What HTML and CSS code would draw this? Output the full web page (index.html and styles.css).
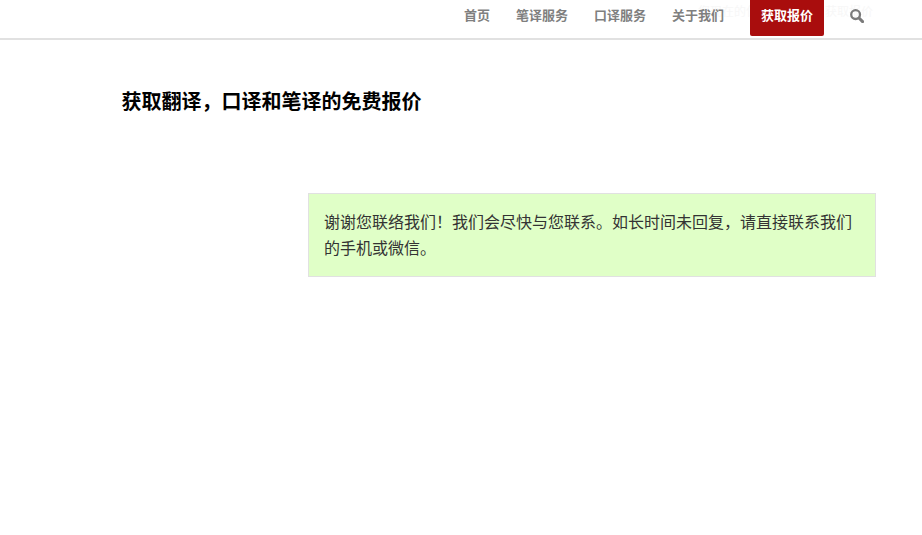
FILE: index.html
```html
<!DOCTYPE html>
<html lang="zh-CN">
<head>
<meta charset="utf-8">
<title>获取报价</title>
<link rel="stylesheet" href="styles.css">
</head>
<body>
<header class="site-header">
  <div class="crumbs"><span class="crumb-a">您现在的位置</span><span class="crumb-b">获取报价</span></div>
  <nav class="nav">
    <a class="nav-link" href="#">首页</a>
    <a class="nav-link" href="#">笔译服务</a>
    <a class="nav-link" href="#">口译服务</a>
    <a class="nav-link" href="#">关于我们</a>
    <a class="nav-cta" href="#">获取报价</a>
    <a class="nav-search" href="#" aria-label="搜索">
      <svg class="search-icon" viewBox="0 0 14 14" width="14" height="14"><circle cx="5.6" cy="5.6" r="4.4" fill="none" stroke="#7a7a7a" stroke-width="2.3"/><path d="M9 9 L12.6 12.6" stroke="#7a7a7a" stroke-width="3" stroke-linecap="round"/></svg>
    </a>
  </nav>
</header>
<main class="content">
  <h1 class="title">获取翻译，口译和笔译的免费报价</h1>
  <div class="layout">
    <div class="notice">谢谢您联络我们！我们会尽快与您联系。如长时间未回复，请直接联系我们的手机或微信。</div>
  </div>
</main>
</body>
</html>
```

FILE: styles.css
```css
* { box-sizing: border-box; }
html, body { margin: 0; padding: 0; background: #fff; }
body {
  font-family: "Noto Sans CJK SC", "Liberation Sans", sans-serif;
  height: 535px;
  overflow: hidden;
}
.site-header {
  position: relative;
  height: 40px;
  border-bottom: 2px solid #e1e1e1;
}
.crumbs {
  position: absolute;
  top: 2px;
  left: 698px;
  font-size: 12px;
  line-height: 18px;
  color: #f7f7f7;
  display: flex;
}
.crumb-b { margin-left: 55px; }
.nav {
  position: relative;
  height: 38px;
  display: flex;
  justify-content: flex-end;
  padding-right: 45px;
}
.nav-link, .nav-cta {
  font-size: 13px;
  font-weight: 700;
  line-height: 30px;
  text-decoration: none;
}
.nav-link { color: #7f7f7f; padding: 0 13px; }
.nav-cta {
  color: #fff;
  background: #a90d0d;
  padding: 0 11px;
  margin: 0 13px;
  height: 36px;
  border-radius: 0 0 2px 2px;
}
.nav-search { display: flex; align-items: flex-start; padding: 9px 13px 0; }
.search-icon { display: block; }
.content { padding: 0 46px 0 122px; }
.title {
  margin: 0;
  padding-top: 46px;
  font-size: 20px;
  line-height: 30px;
  font-weight: 700;
  color: #000;
  text-indent: -0.5px;
}
.layout { display: flex; justify-content: flex-end; margin-top: 77px; }
.notice {
  width: 568px;
  padding: 14px 15px 16px;
  font-size: 16px;
  line-height: 26px;
  color: #333;
  background: #e0ffc7;
  border: 1px solid #e1e1e1;
}
```
